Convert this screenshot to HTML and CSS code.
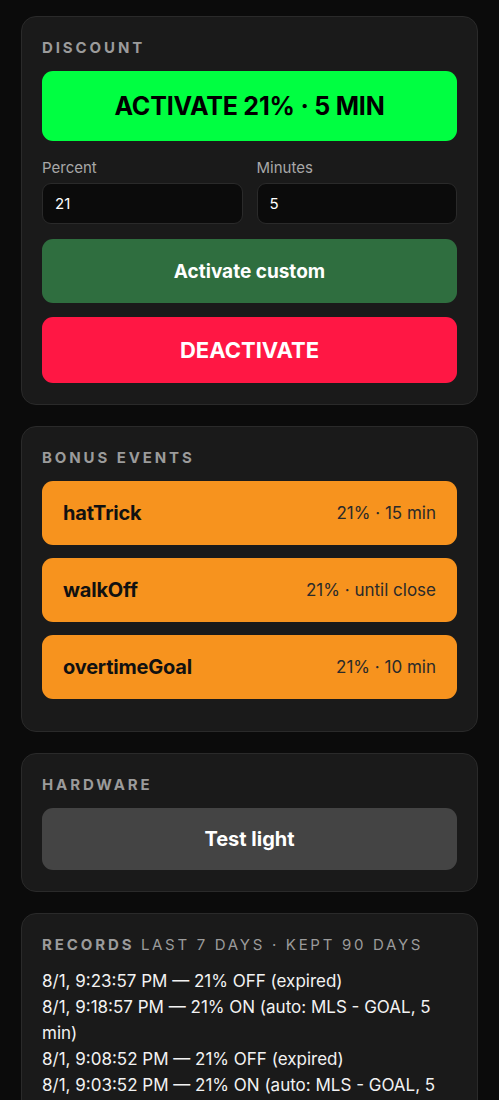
FILE: index.html
```html
<!DOCTYPE html>
<html>
<head>
<meta charset="utf-8">
<link rel="stylesheet" href="styles.css">
</head>
<body>
<main class="page">
  <section class="card">
    <h2 class="label">Discount</h2>
    <button class="btn btn-go">ACTIVATE 21% · 5 MIN</button>
    <div class="fields">
      <label class="field">
        <span class="field-name">Percent</span>
        <input class="input" value="21">
      </label>
      <label class="field">
        <span class="field-name">Minutes</span>
        <input class="input" value="5">
      </label>
    </div>
    <button class="btn btn-custom">Activate custom</button>
    <button class="btn btn-stop">DEACTIVATE</button>
  </section>

  <section class="card">
    <h2 class="label">Bonus events</h2>
    <div class="events">
      <div class="event"><span class="event-name">hatTrick</span><span class="event-meta">21% · 15 min</span></div>
      <div class="event"><span class="event-name">walkOff</span><span class="event-meta">21% · until close</span></div>
      <div class="event"><span class="event-name">overtimeGoal</span><span class="event-meta">21% · 10 min</span></div>
    </div>
  </section>

  <section class="card">
    <h2 class="label">Hardware</h2>
    <button class="btn btn-test">Test light</button>
  </section>

  <section class="card">
    <h2 class="label">Records <span class="label-sub">last 7 days · kept 90 days</span></h2>
    <ul class="log">
      <li>8/1, 9:23:57 PM — 21% OFF (expired)</li>
      <li>8/1, 9:18:57 PM — 21% ON (auto: MLS - GOAL, 5 min)</li>
      <li>8/1, 9:08:52 PM — 21% OFF (expired)</li>
      <li>8/1, 9:03:52 PM — 21% ON (auto: MLS - GOAL, 5 min)</li>
      <li>8/1, 8:58:52 PM — 21% OFF (expired)</li>
    </ul>
  </section>
</main>
</body>
</html>
```

FILE: styles.css
```css
* { box-sizing: border-box; }
html, body { margin: 0; }
body {
  background: #0b0b0b;
  color: #fff;
  font-family: Inter, "Noto Sans", sans-serif;
}
.page {
  display: flex;
  flex-direction: column;
  gap: 21px;
  padding: 16px 21px;
}
.card {
  background: #1a1a1a;
  border: 1px solid #2a2a2a;
  border-radius: 15px;
  padding: 20px 20px 21px;
  display: flex;
  flex-direction: column;
}
.label {
  margin: 1px 0 14px;
  font-size: 15px;
  font-weight: 700;
  letter-spacing: 2.9px;
  text-transform: uppercase;
  color: #9b9b9b;
  line-height: 19px;
}
.label-sub { font-weight: 400; letter-spacing: 2.7px; }
.btn {
  border: 0;
  border-radius: 11px;
  font-family: inherit;
  font-weight: 700;
  width: 100%;
  cursor: pointer;
}
.btn-go {
  background: #00ff41;
  color: #000;
  height: 70px;
  font-size: 25px;
  letter-spacing: -0.2px;
}
.fields {
  display: flex;
  gap: 14px;
  margin: 18px 0 15px;
}
.field { flex: 1 1 0; min-width: 0; display: flex; flex-direction: column; gap: 6px; }
.field-name { font-size: 15px; color: #a8a8a8; line-height: 18px; }
.input {
  width: 100%;
  height: 41px;
  background: #0b0b0b;
  border: 1px solid #2a2a2a;
  border-radius: 9px;
  color: #fff;
  font-family: inherit;
  font-size: 15px;
  padding: 0 12px;
  outline: none;
}
.btn-custom {
  background: #2f6e3f;
  color: #fff;
  height: 64px;
  font-size: 19px;
  margin-bottom: 14px;
}
.btn-stop {
  background: #ff1744;
  color: #fff;
  height: 66px;
  font-size: 22px;
}
.events {
  display: flex;
  flex-direction: column;
  gap: 13px;
  margin-bottom: 11px;
}
.event {
  background: #f7931e;
  border-radius: 11px;
  height: 64px;
  display: flex;
  align-items: center;
  justify-content: space-between;
  padding: 0 21px;
  color: #111;
}
.event-name { font-size: 20px; font-weight: 700; letter-spacing: -0.2px; }
.event-meta { font-size: 17px; color: #2a2a2a; }
.btn-test {
  background: #444;
  color: #fff;
  height: 62px;
  font-size: 20px;
}
.log {
  list-style: none;
  margin: 0;
  padding: 0;
  font-size: 17px;
  line-height: 26px;
  color: #f2f2f2;
}
```
